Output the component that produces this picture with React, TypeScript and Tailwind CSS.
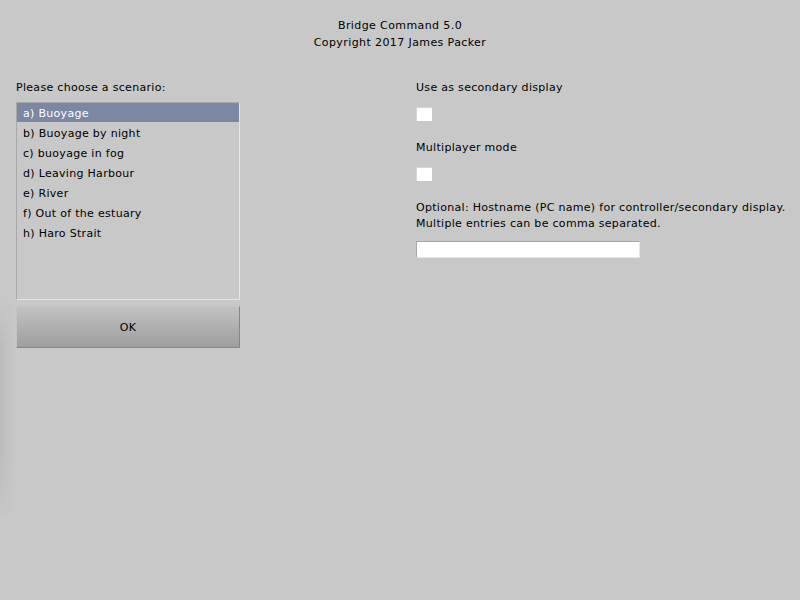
import React from "react";

const items = [
  "a) Buoyage",
  "b) Buoyage by night",
  "c) buoyage in fog",
  "d) Leaving Harbour",
  "e) River",
  "f) Out of the estuary",
  "h) Haro Strait",
];

export default function App() {
  return (
    <div
      className="relative w-[800px] h-[600px] bg-[#c8c8c8] text-[#000] text-[11px] leading-[16px] tracking-[0.3px] overflow-hidden"
      style={{ fontFamily: '"DejaVu Sans", Verdana, sans-serif' }}
    >
      <div className="pointer-events-none absolute left-0 top-[300px] w-[16px] h-[220px] bg-[linear-gradient(to_right,rgba(0,0,0,0.06),rgba(0,0,0,0))] [mask-image:linear-gradient(to_bottom,transparent,black_20%,black_70%,transparent)]" />
      <div className="pt-[17px] text-center leading-[17px] tracking-[0.4px]">
        <div>Bridge Command 5.0</div>
        <div>Copyright 2017 James Packer</div>
      </div>
      <div className="flex mt-[28px]">
        <div className="ml-[16px] w-[224px] flex flex-col">
          <div className="h-[16px] pt-[1px] leading-[16px]">Please choose a scenario:</div>
          <div className="mt-[7px] h-[198px] border border-t-[#a8a8a8] border-l-[#a8a8a8] border-r-[#e6e6e6] border-b-[#e6e6e6]">
            {items.map((it, i) => (
              <div key={it} className="h-[20px]">
                <div
                  className={
                    i === 0
                      ? "h-[19px] bg-[#7b87a3] text-white pl-[6px] leading-[21px]"
                      : "h-[19px] pl-[6px] leading-[21px]"
                  }
                >
                  {it}
                </div>
              </div>
            ))}
          </div>
          <div className="mt-[6px] h-[42px] flex items-center justify-center pt-[2px] border border-t-[#c4c4c4] border-l-[#c4c4c4] border-r-[#868686] border-b-[#868686] bg-gradient-to-b from-[#c2c2c2] to-[#9e9e9e]">
            OK
          </div>
        </div>
        <div className="ml-[176px] flex flex-col">
          <div className="h-[16px] pt-[1px] leading-[16px]">Use as secondary display</div>
          <div className="mt-[12px] w-[16px] h-[14px] bg-white border-l border-t border-[#d8d8d8]" />
          <div className="mt-[18px] h-[16px] pt-[1px] leading-[16px]">Multiplayer mode</div>
          <div className="mt-[12px] w-[16px] h-[14px] bg-white border-l border-t border-[#d8d8d8]" />
          <div className="mt-[18px] pt-[1px]">
            <div>Optional: Hostname (PC name) for controller/secondary display.</div>
            <div>Multiple entries can be comma separated.</div>
          </div>
          <div className="mt-[9px] w-[224px] h-[17px] bg-white border border-t-[#a8a8a8] border-l-[#a8a8a8] border-r-[#e8e8e8] border-b-[#e8e8e8]" />
        </div>
      </div>
    </div>
  );
}
